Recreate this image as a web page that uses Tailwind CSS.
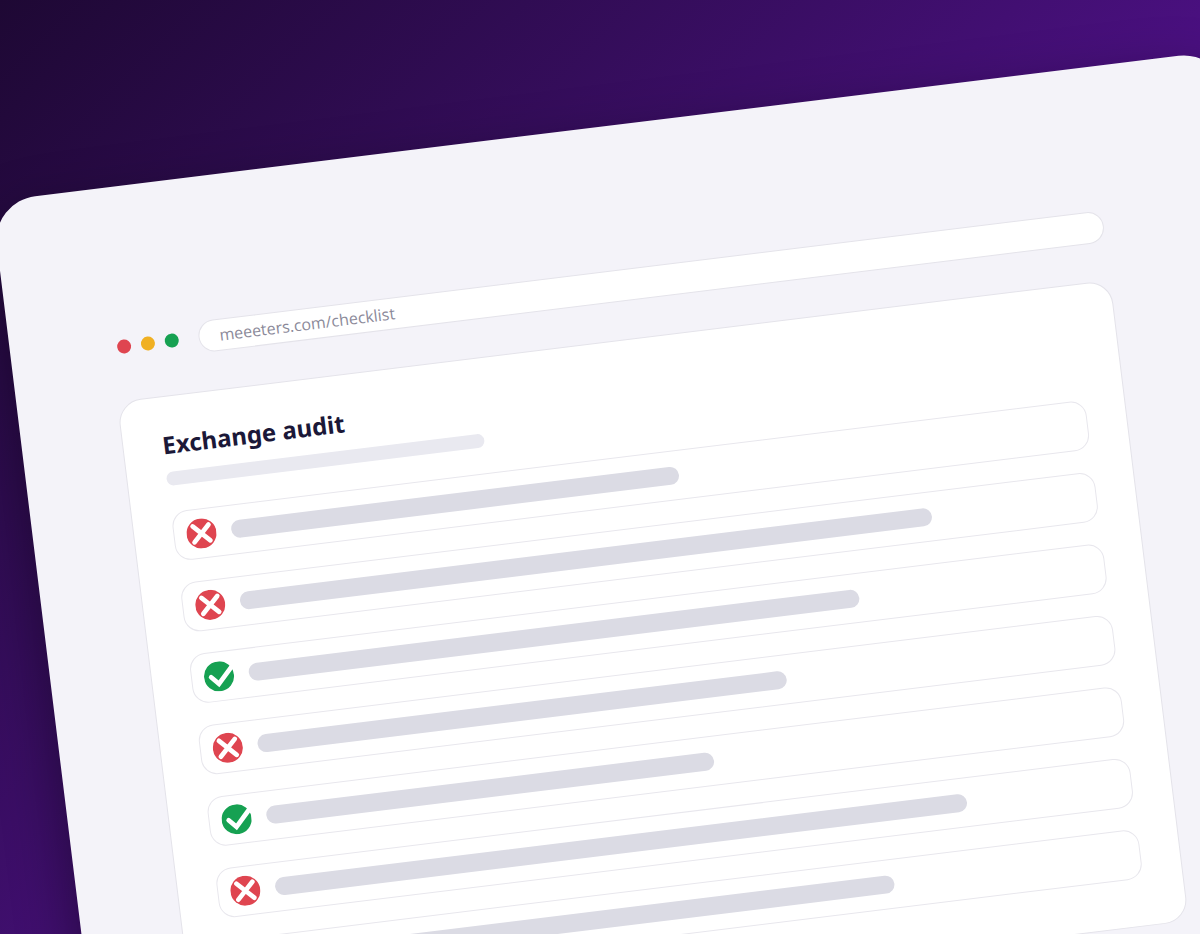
<!DOCTYPE html>
<html lang="en">
<head>
<meta charset="utf-8">
<meta name="viewport" content="width=device-width, initial-scale=1">
<title>Exchange audit</title>
<script src="https://cdn.jsdelivr.net/npm/@tailwindcss/browser@4"></script>
</head>
<body class="h-screen overflow-hidden bg-linear-135 from-[#1e0834] via-[#4a1080] via-58% to-[#5b1a9e] font-['Noto_Sans',sans-serif]">
<svg class="hidden" aria-hidden="true">
  <symbol id="fail" viewBox="0 0 30 30"><circle cx="15" cy="15" r="15" fill="#df4550"/><path d="M7 7 23 23M23 7 7 23" fill="none" stroke="#fff" stroke-width="4.700" stroke-linecap="round"/></symbol>
  <symbol id="pass" viewBox="0 0 30 30"><circle cx="15" cy="15" r="15" fill="#16a152"/><path d="M7 15 14 22.500 28 7.500" fill="none" stroke="#fff" stroke-width="4.700" stroke-linecap="round"/></symbol>
</svg>
<main class="h-screen origin-top-left -rotate-7 pt-[199px]">
  <div class="-ml-[33px] w-[1240px] rounded-[44px] bg-[#f4f3f9] pt-36 pr-[139px] pb-24 pl-[100px] shadow-[0_24px_60px_rgba(0,0,0,0.45)]">
    <header class="flex items-center gap-5 pl-[7px]">
      <div class="flex gap-[10px]">
        <span class="size-[14px] rounded-full bg-[#df4550]"></span>
        <span class="size-[14px] rounded-full bg-[#f0b023]"></span>
        <span class="size-[14px] rounded-full bg-[#16a152]"></span>
      </div>
      <input type="text" aria-label="Address" value="meeeters.com/checklist" class="h-8 flex-1 rounded-full border border-[#e4e3ea] bg-white px-5 font-['Open_Sans','Noto_Sans',sans-serif] text-base text-[#8b8999]">
    </header>
    <section class="mt-[38px] rounded-3xl border border-[#e4e3ea] bg-white px-[39px] pt-[30px] pb-[47px]">
      <h1 class="text-2xl leading-9 font-bold text-[#1b1838]">Exchange audit</h1>
      <div class="mt-[9px] h-[14px] w-80 rounded-full bg-[#e9e9f0]"></div>
      <ul class="mt-[26px] flex flex-col gap-[22px]">
        <li class="flex h-[50px] items-center gap-[15px] rounded-2xl border border-[#e8e7ed] px-3"><svg class="size-[30px]" role="img" aria-label="Failed"><use href="#fail"/></svg><div class="mr-[30px] flex-1"><div class="h-[18px] w-[55%] rounded-full bg-[#dbdbe4]"></div></div></li>
        <li class="flex h-[50px] items-center gap-[15px] rounded-2xl border border-[#e8e7ed] px-3"><svg class="size-[30px]" role="img" aria-label="Failed"><use href="#fail"/></svg><div class="mr-[30px] flex-1"><div class="h-[18px] w-[85%] rounded-full bg-[#dbdbe4]"></div></div></li>
        <li class="flex h-[50px] items-center gap-[15px] rounded-2xl border border-[#e8e7ed] px-3"><svg class="size-[30px]" role="img" aria-label="Passed"><use href="#pass"/></svg><div class="mr-[30px] flex-1"><div class="h-[18px] w-[75%] rounded-full bg-[#dbdbe4]"></div></div></li>
        <li class="flex h-[50px] items-center gap-[15px] rounded-2xl border border-[#e8e7ed] px-3"><svg class="size-[30px]" role="img" aria-label="Failed"><use href="#fail"/></svg><div class="mr-[30px] flex-1"><div class="h-[18px] w-[65%] rounded-full bg-[#dbdbe4]"></div></div></li>
        <li class="flex h-[50px] items-center gap-[15px] rounded-2xl border border-[#e8e7ed] px-3"><svg class="size-[30px]" role="img" aria-label="Passed"><use href="#pass"/></svg><div class="mr-[30px] flex-1"><div class="h-[18px] w-[55%] rounded-full bg-[#dbdbe4]"></div></div></li>
        <li class="flex h-[50px] items-center gap-[15px] rounded-2xl border border-[#e8e7ed] px-3"><svg class="size-[30px]" role="img" aria-label="Failed"><use href="#fail"/></svg><div class="mr-[30px] flex-1"><div class="h-[18px] w-[85%] rounded-full bg-[#dbdbe4]"></div></div></li>
        <li class="flex h-[50px] items-center gap-[15px] rounded-2xl border border-[#e8e7ed] px-3"><svg class="size-[30px]" role="img" aria-label="Failed"><use href="#fail"/></svg><div class="mr-[30px] flex-1"><div class="h-[18px] w-[75%] rounded-full bg-[#dbdbe4]"></div></div></li>
      </ul>
    </section>
  </div>
</main>
</body>
</html>
